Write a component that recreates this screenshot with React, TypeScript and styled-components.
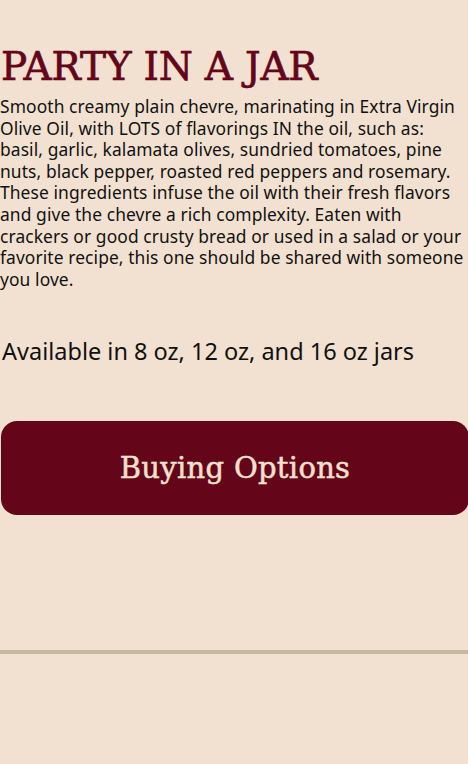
import React from "react";
import styled, { createGlobalStyle } from "styled-components";

const Global = createGlobalStyle`
  html, body { margin: 0; padding: 0; background: #f2e1d0; }
  body { font-family: "Noto Sans", sans-serif; color: #111; }
`;

const Page = styled.div`
  width: 468px;
  min-height: 764px;
  background: #f2e1d0;
  display: flex;
  flex-direction: column;
  padding-top: 44px;
  box-sizing: border-box;
`;

const Title = styled.h1`
  margin: 0 0 6px 1px;
  font-family: "DejaVu Serif", "Liberation Serif", serif;
  font-weight: 400;
  font-size: 39px;
  line-height: 46px;
  color: #65041a;
  letter-spacing: -0.2px;
  -webkit-text-stroke: 0.7px #65041a;
`;

const Body = styled.p`
  margin: 0;
  font-family: "Noto Sans", sans-serif;
  font-size: 17.4px;
  line-height: 21.6px;
  letter-spacing: 0.1px;
  color: #111;
`;

const Sizes = styled.p`
  margin: 46px 0 0 2px;
  font-family: "Noto Sans", sans-serif;
  font-size: 23.5px;
  line-height: 30px;
  color: #111;
`;

const BuyButton = styled.button`
  margin: 55px 0 0 1px;
  width: 468px;
  height: 94px;
  border: none;
  border-radius: 16px;
  background: #65051a;
  color: #f2e1d0;
  font-family: "DejaVu Serif", "Liberation Serif", serif;
  font-size: 29px;
  letter-spacing: 0.3px;
  -webkit-text-stroke: 0.5px #f2e1d0;
  cursor: pointer;
  padding: 0;
`;

const Divider = styled.hr`
  margin: 135px 0 0 0;
  border: none;
  height: 4px;
  background: #c5b9a0;
`;

export default function App() {
  return (
    <Page>
      <Global />
      <Title>PARTY IN A JAR</Title>
      <Body>
        Smooth creamy plain chevre, marinating in Extra Virgin<br />
        Olive Oil, with LOTS of flavorings IN the oil, such as:<br />
        basil, garlic, kalamata olives, sundried tomatoes, pine<br />
        nuts, black pepper, roasted red peppers and rosemary.<br />
        These ingredients infuse the oil with their fresh flavors<br />
        and give the chevre a rich complexity. Eaten with<br />
        crackers or good crusty bread or used in a salad or your<br />
        favorite recipe, this one should be shared with someone<br />
        you love.
      </Body>
      <Sizes>Available in 8 oz, 12 oz, and 16 oz jars</Sizes>
      <BuyButton>Buying Options</BuyButton>
      <Divider />
    </Page>
  );
}
